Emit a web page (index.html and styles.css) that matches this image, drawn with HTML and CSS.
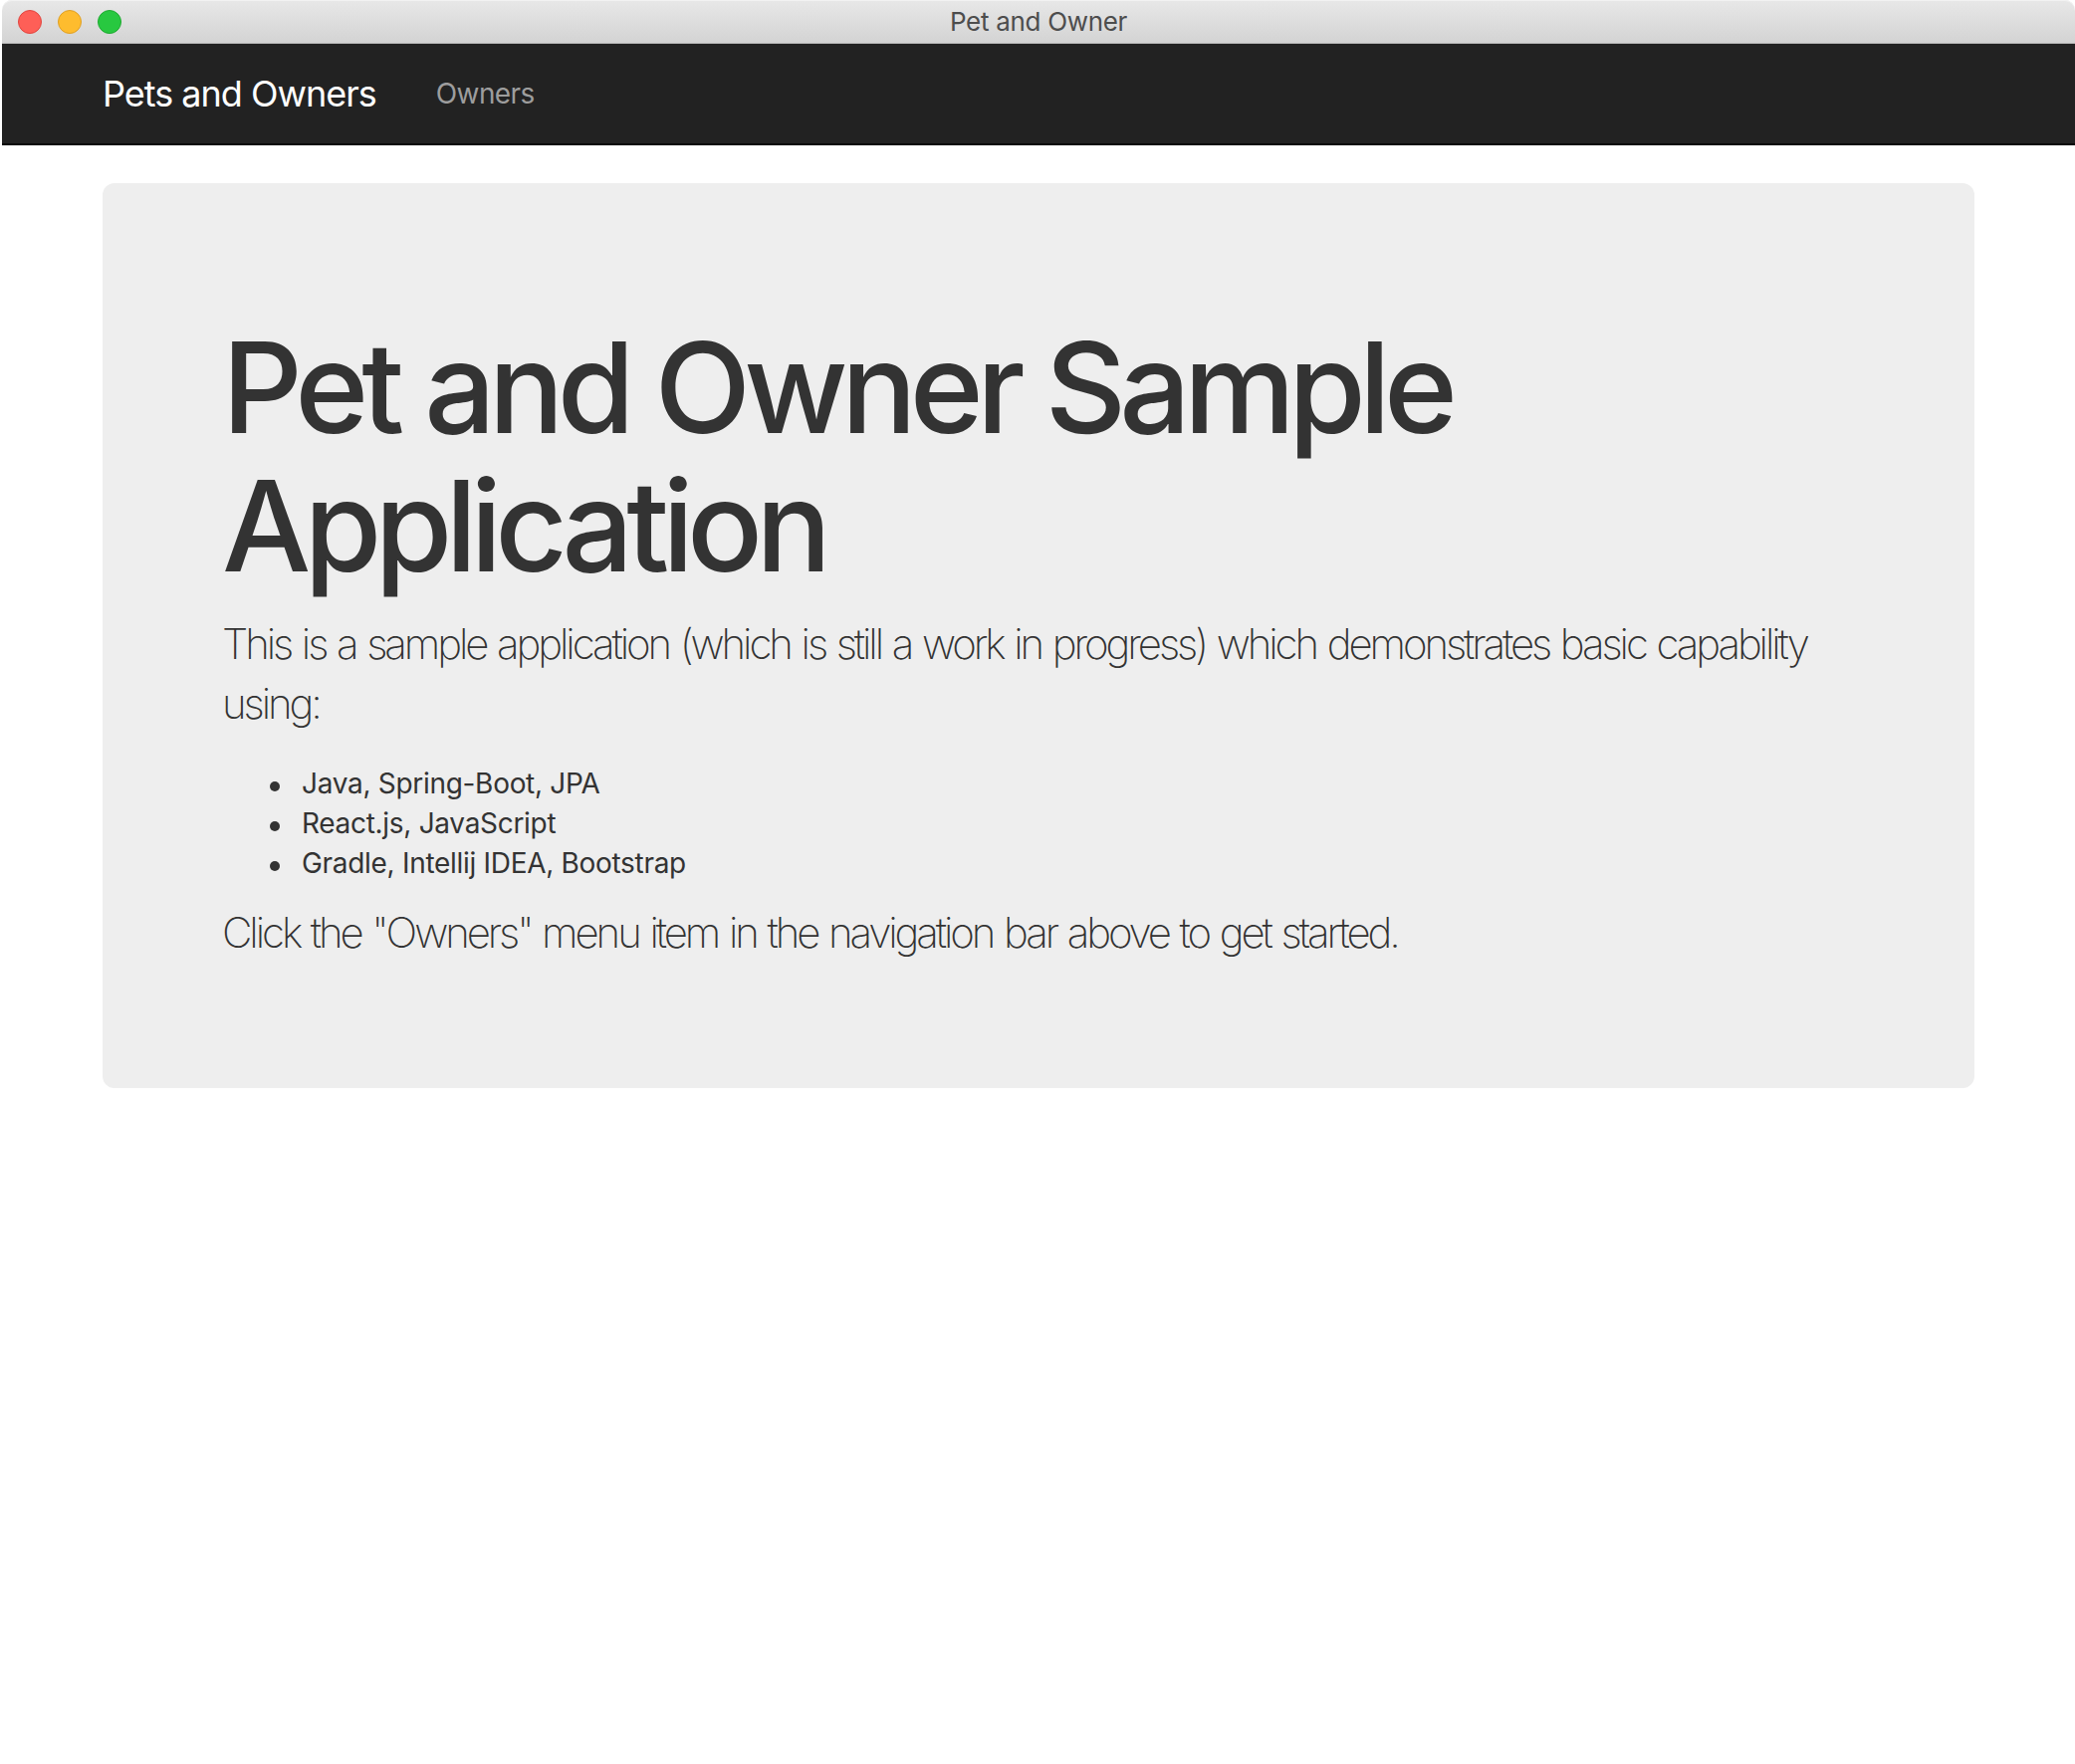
FILE: index.html
```html
<!DOCTYPE html>
<html lang="en">
<head>
<meta charset="utf-8">
<title>Pet and Owner</title>
<link rel="stylesheet" href="styles.css">
</head>
<body>
<div class="window">
  <header class="titlebar">
    <div class="lights">
      <span class="light red"></span>
      <span class="light yellow"></span>
      <span class="light green"></span>
    </div>
    <div class="title">Pet and Owner</div>
    <div class="spacer"></div>
  </header>
  <nav class="navbar">
    <div class="container nav-inner">
      <a class="brand" href="#">Pets and Owners</a>
      <ul class="nav">
        <li><a class="nav-link" href="#">Owners</a></li>
      </ul>
    </div>
  </nav>
  <main class="container">
    <div class="jumbotron">
      <h1 class="heading">Pet and Owner Sample Application</h1>
      <p class="lead">This is a sample application (which is still a work in progress) which demonstrates basic capability using:</p>
      <ul class="techs">
        <li>Java, Spring-Boot, JPA</li>
        <li>React.js, JavaScript</li>
        <li>Gradle, Intellij IDEA, Bootstrap</li>
      </ul>
      <p class="lead">Click the "Owners" menu item in the navigation bar above to get started.</p>
    </div>
  </main>
</div>
</body>
</html>
```
FILE: styles.css
```css
html, body {
  margin: 0;
  padding: 0;
  background: #ffffff;
}
body {
  font-family: Inter, "Liberation Sans", sans-serif;
  font-size: 28px;
  line-height: 40px;
  color: #333333;
}
.window {
  padding-left: 2px;
  background: #ffffff;
}
.titlebar {
  height: 43px;
  border-bottom: 1px solid #b9b9b9;
  border-top-left-radius: 10px;
  border-top-right-radius: 10px;
  background: linear-gradient(to bottom, #e8e8e8 0%, #d3d3d3 100%);
  box-shadow: inset 0 1px 0 #f2f2f2;
  display: grid;
  grid-template-columns: 1fr auto 1fr;
  align-items: center;
}
.lights {
  display: flex;
  gap: 16px;
  padding-left: 16px;
}
.light {
  width: 22px;
  height: 22px;
  border-radius: 50%;
  border: 1px solid;
}
.red { background: #fe5f57; border-color: #e1453f; }
.yellow { background: #febc2e; border-color: #dfa024; }
.green { background: #28c840; border-color: #1eaa30; }
.title {
  font-size: 26px;
  line-height: 32px;
  color: #4d4d4d;
  letter-spacing: -0.3px;
}
.container {
  width: 1880px;
  padding: 0 30px;
  margin: 0 auto;
}
.navbar {
  height: 100px;
  background: #222222;
  border-bottom: 2px solid #080808;
}
.nav-inner {
  display: flex;
  align-items: center;
  height: 100px;
}
.brand {
  font-size: 36px;
  line-height: 40px;
  color: #ffffff;
  text-decoration: none;
  padding-right: 30px;
  letter-spacing: -1px;
}
.nav {
  list-style: none;
  margin: 0;
  padding: 0;
  display: flex;
}
.nav-link {
  display: block;
  padding: 0 30px;
  font-size: 28px;
  line-height: 40px;
  color: #9d9d9d;
  text-decoration: none;
  letter-spacing: -0.6px;
}
.jumbotron {
  margin-top: 38px;
  margin-bottom: 60px;
  background: #eeeeee;
  border-radius: 12px;
  padding: 96px 120px;
}
.heading {
  margin: 40px 0 20px;
  font-size: 126px;
  line-height: 138.6px;
  font-weight: 500;
  letter-spacing: -6.85px;
}
.lead {
  margin: 0 0 30px;
  font-size: 42px;
  line-height: 60px;
  font-weight: 200;
  letter-spacing: -3.1px;
  word-spacing: 2px;
}
.techs {
  margin: 0 0 20px;
  padding-left: 80px;
  font-size: 28px;
  line-height: 40px;
  letter-spacing: -0.3px;
  list-style: none;
}
.techs li::before {
  content: "";
  display: inline-block;
  width: 10px;
  height: 10px;
  border-radius: 50%;
  background: #333333;
  margin-left: -32px;
  margin-right: 22px;
  vertical-align: middle;
}
```
